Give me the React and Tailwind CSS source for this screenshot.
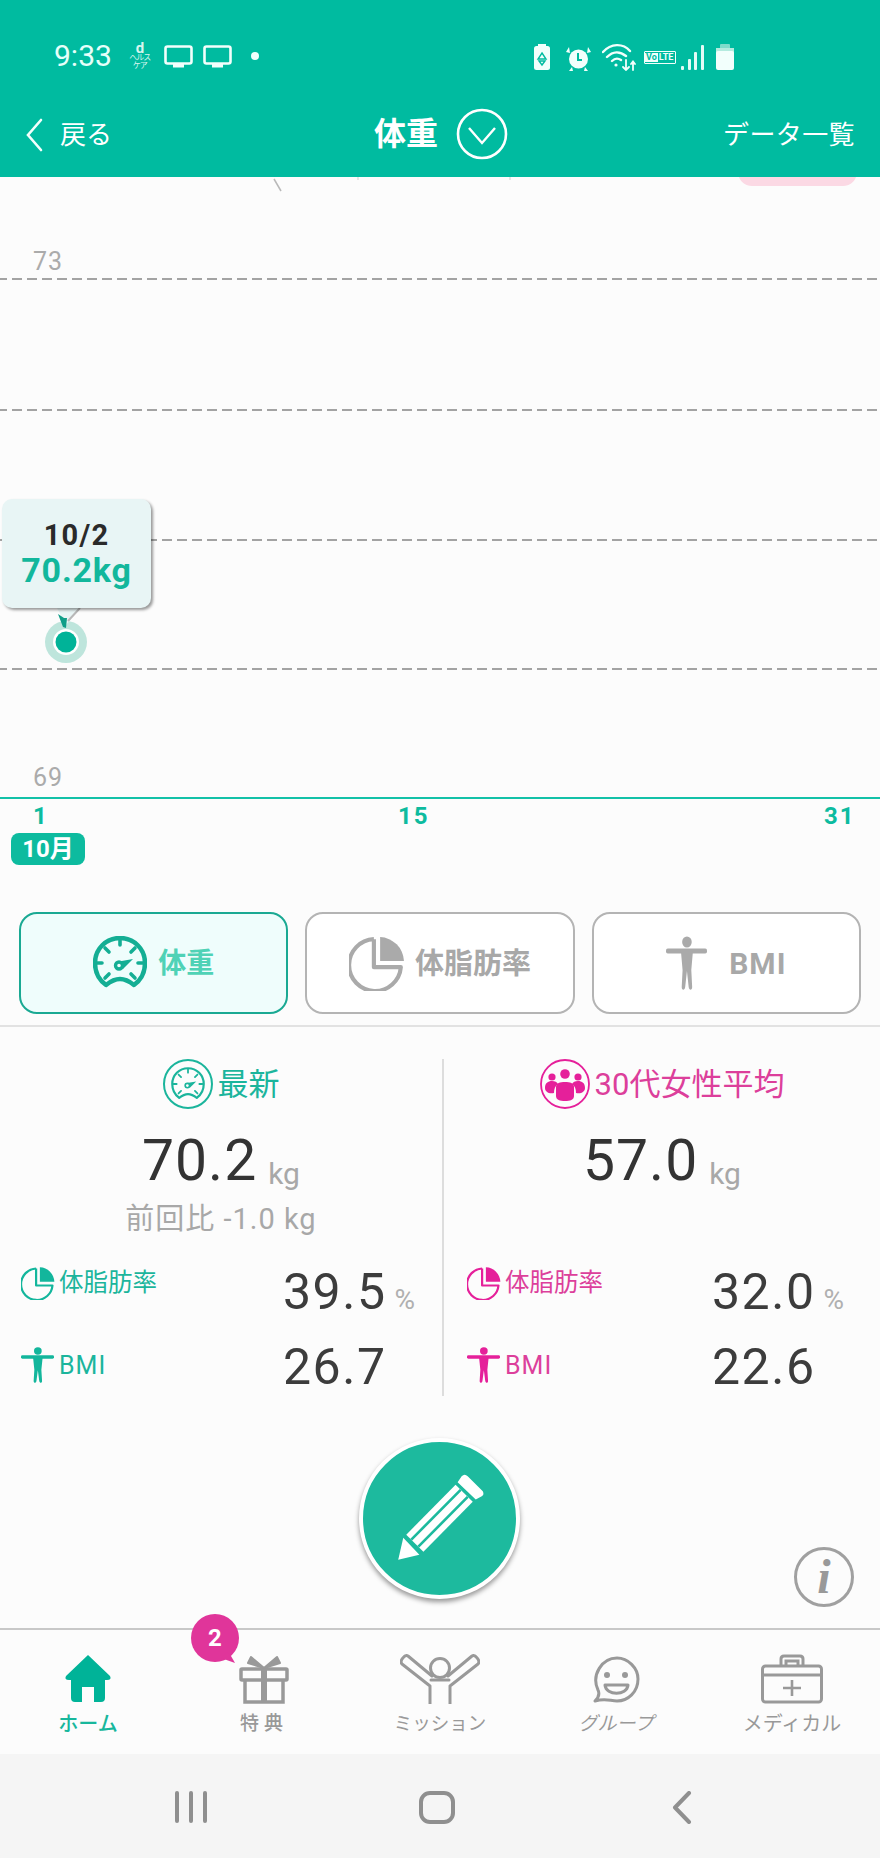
import React from "react";

const TEAL = "#00BBA0";

function Gauge({ size = 54, color = "#14AE94", sw = 4, bg = "#EFFDFC" }) {
  return (
    <svg width={size} height={size} viewBox="0 0 54 54" fill="none" stroke={color} strokeWidth={sw} strokeLinecap="round" strokeLinejoin="round">
      <path d="M13 49 C6 44 2 36 2 27 C2 13 13 2 27 2 C41 2 52 13 52 27 C52 36 48 44 41 49 C36 45 32 43 27 43 C22 43 18 45 13 49 Z" />
      <path d="M27 3 V9 M12 12 L16 16 M42 12 L38 16 M4 27 H9 M45 27 H50 M12 42 L16 38 M42 42 L38 38" strokeWidth={sw * 0.8} />
      <path d="M23 26 L40 23 L30 33 Z" fill={color} stroke="none" />
      <circle cx="26" cy="29.5" r="3.5" fill={bg} strokeWidth={sw * 0.75} />
    </svg>
  );
}

function Pie({ size = 54, color = "#AAAAAA", sw = 4 }) {
  return (
    <svg width={size} height={size} viewBox="0 0 54 54" fill="none">
      <path d="M24 4 V31 H50 A25 25 0 1 1 24 4" stroke={color} strokeWidth={sw} strokeLinejoin="round" />
      <path d="M30 2 A24 24 0 0 1 53 25 H30 Z" fill={color} />
    </svg>
  );
}

function Person({ w = 47, h = 54, color = "#AAAAAA" }) {
  return (
    <svg width={w} height={h} viewBox="0 0 47 54" preserveAspectRatio="none" fill={color}>
      <circle cx="24" cy="6" r="5.5" />
      <rect x="0" y="12.5" width="47" height="5" rx="2" />
      <path d="M17 14 H31 L29 34 L30 51 C30 54.5 26.5 54.5 26 51 L24 35 L22 51 C21.5 54.5 18 54.5 18 51 L19 34 Z" />
    </svg>
  );
}

function GroupPeople() {
  return (
    <svg width="50" height="50" viewBox="0 0 50 50" fill="none">
      <circle cx="25" cy="25" r="24" stroke="#E5209A" strokeWidth="1.8" />
      <g fill="#E5209A">
        <circle cx="25" cy="15" r="4.8" />
        <circle cx="12" cy="18" r="3.6" />
        <circle cx="38" cy="18" r="3.6" />
        <path d="M5 29 C5 24 8 22 12 22 C15 22 17 23 18 25 C15 27 14 30 14 34 C9 35 5 33 5 29 Z" />
        <path d="M45 29 C45 24 42 22 38 22 C35 22 33 23 32 25 C35 27 36 30 36 34 C41 35 45 33 45 29 Z" />
        <path d="M16 28 C16 24 20 23 25 23 C30 23 34 24 34 28 V37 C34 41 30 42 25 42 C20 42 16 41 16 37 Z" />
      </g>
    </svg>
  );
}

function BigValue({ value }) {
  return (
    <div className="flex items-baseline">
      <span className="text-[57px] leading-[66px] tracking-[1px] text-[#333333]">{value}</span>
      <span className="relative top-[4px] ml-[11px] text-[30px] leading-none text-[#A8A8A8]">kg</span>
    </div>
  );
}

function SmallValue({ value, unit }) {
  return (
    <div className="flex items-baseline">
      <span className="text-[50px] leading-[58px] tracking-[1.5px] text-[#3C3C3C]">{value}</span>
      {unit && <span className="ml-[8px] text-[28px] leading-none text-[#B0B0B0]">{unit}</span>}
    </div>
  );
}

function StatColumn({ heading, icon, value, sub, color, pie, person, rows, pad, labelW, className = "" }) {
  return (
    <div className={`flex flex-col ${className}`}>
      <div className="flex h-[50px] items-center justify-center gap-[5px]">
        {icon}
        <span className="text-[31px] leading-none" style={{ color }}>{heading}</span>
      </div>
      <div className="mt-[19px] flex h-[66px] justify-center">
        <BigValue value={value} />
      </div>
      <div className="mt-[7px] flex h-[36px] items-center justify-center whitespace-nowrap text-[29px] leading-none tracking-[1px] text-[#A8A8A8]">{sub}</div>
      <div className="mt-[26px] flex h-[58px] items-start" style={{ paddingLeft: pad }}>
        <div className="mt-[3px] flex items-center gap-[4px]" style={{ width: labelW }}>
          {pie}
          <span className="text-[24.5px] leading-none" style={{ color }}>体脂肪率</span>
        </div>
        <SmallValue value={rows[0]} unit="%" />
      </div>
      <div className="mt-[17px] flex h-[58px] items-start" style={{ paddingLeft: pad }}>
        <div className="mt-[9px] flex items-center gap-[5px]" style={{ width: labelW }}>
          {person}
          <span className="text-[25px] leading-none tracking-[1px]" style={{ color }}>BMI</span>
        </div>
        <SmallValue value={rows[1]} />
      </div>
    </div>
  );
}

function TabButton({ active, icon, label, gap, labelCls = "text-[28px]" }) {
  return (
    <button
      className={`flex h-[102px] w-[270px] items-center justify-center rounded-[18px] border-2 ${
        active ? "border-[#1AA993] bg-[#EFFDFC] text-[#4FD2B6]" : "border-[#B4B4B4] bg-white text-[#A8A8A8]"
      } ${gap}`}
    >
      {icon}
      <span className={`pt-[2px] font-bold leading-none ${labelCls}`}>{label}</span>
    </button>
  );
}

function NavItem({ icon, label, cls }) {
  return (
    <div className="flex w-[176px] flex-col items-center">
      <div className="flex h-[52px] items-end">{icon}</div>
      <span className={`mt-[8px] whitespace-nowrap leading-[24px] ${cls}`}>{label}</span>
    </div>
  );
}

export default function App() {
  return (
    <div className="flex h-[1858px] w-[880px] flex-col overflow-hidden bg-[#FCFCFC] font-['Roboto','Noto_Sans_CJK_JP',sans-serif]">
      <header className="h-[177px] shrink-0 bg-[#00BBA0] text-white">
        <div className="flex h-[85px] items-start justify-between pl-[54px] pr-[146px] pt-[41px]">
          <div className="flex items-center">
            <span className="text-[30px] leading-[30px] text-[#E6FFFA]">9:33</span>
            <div className="ml-[17px] flex w-[22px] flex-col items-center whitespace-nowrap text-[#D8F5EE]">
              <span className="text-[15px] font-bold leading-[12px]">d</span>
              <span className="text-[8px] leading-[8px] tracking-[-1px]">ヘルス</span>
              <span className="text-[8px] leading-[8px] tracking-[-1px]">ケア</span>
            </div>
            {[0, 1].map((i) => (
              <svg key={i} className={i === 0 ? "ml-[13px]" : "ml-[10px]"} width="29" height="23" viewBox="0 0 29 23" fill="none">
                <rect x="1.5" y="1.5" width="26" height="17" rx="2" stroke="#F2FFFC" strokeWidth="2.6" />
                <rect x="9" y="19" width="11" height="3.5" fill="#F2FFFC" />
              </svg>
            ))}
            <span className="ml-[19px] h-[8px] w-[8px] rounded-full bg-[#F2FFFC]" />
          </div>
          <div className="flex items-center pt-[2px]">
            <svg width="16" height="26" viewBox="0 0 16 26">
              <rect x="4" y="0" width="8" height="3" fill="#F2FFFC" />
              <rect x="0" y="2" width="16" height="24" rx="2.5" fill="#F2FFFC" />
              <path d="M8 9 L12 15 H4 Z M5 17 H11 L8 21 Z" fill="none" stroke={TEAL} strokeWidth="1.4" />
            </svg>
            <svg className="ml-[16px]" width="25" height="27" viewBox="0 0 25 27">
              <circle cx="12.5" cy="15" r="9.5" fill="#F2FFFC" />
              <path d="M3 3 L0 8 L4 9 Z M22 3 L25 8 L21 9 Z M6 23 L3 27 H7 Z M19 23 L22 27 H18 Z" fill="#F2FFFC" />
              <path d="M12 9 V16 H16" fill="none" stroke={TEAL} strokeWidth="2" />
            </svg>
            <svg className="ml-[11px]" width="34" height="28" viewBox="0 0 34 28" fill="none" stroke="#F2FFFC" strokeWidth="2.4" strokeLinecap="round">
              <path d="M1 9 C9 0 21 0 28 8 M5 14 C11 8 18 8 24 13 M10 18 C13 15 16 15 19 17" />
              <circle cx="14" cy="22" r="1.6" fill="#F2FFFC" stroke="none" />
              <path d="M24 17 V27 M21 24 L24 27 L27 24 M31 27 V19 M29 21 L31 18.5 L33 21" strokeWidth="1.8" />
            </svg>
            <div className="ml-[8px] flex h-[13px] w-[32px] items-center overflow-hidden rounded-[1px] border border-[#F2FFFC] text-[9px] font-bold leading-none">
              <span className="bg-[#F2FFFC] px-[1px] text-[#00BBA0]">Vo</span>
              <span className="pl-[1px] text-[#F2FFFC]">LTE</span>
            </div>
            <svg className="ml-[5px]" width="23" height="25" viewBox="0 0 23 25" fill="#E4FBF6">
              <rect x="0" y="21" width="3" height="4" rx="1" />
              <rect x="7" y="14" width="3" height="11" rx="1" />
              <rect x="13" y="7" width="3" height="18" rx="1" />
              <rect x="20" y="0" width="3" height="25" rx="1" />
            </svg>
            <svg className="ml-[12px]" width="18" height="26" viewBox="0 0 18 26">
              <rect x="4" y="0" width="10" height="5" rx="1" fill="#7FDCCB" />
              <rect x="0" y="4" width="18" height="6" fill="#B4EBDF" />
              <rect x="0" y="7" width="18" height="19" rx="2" fill="#F2FFFC" />
            </svg>
          </div>
        </div>
        <div className="relative flex h-[92px] items-center justify-between pl-[25px] pr-[25px] pt-[8px]">
          <div className="flex items-center gap-[17px]">
            <svg width="18" height="34" viewBox="0 0 18 34" fill="none" stroke="#F2FFFC" strokeWidth="2.6" strokeLinecap="round">
              <path d="M16 2 L3 17 L16 32" />
            </svg>
            <span className="text-[26px] leading-none">戻る</span>
          </div>
          <div className="absolute left-[374px] top-[23px] flex items-center gap-[18px]">
            <span className="text-[32px] font-bold leading-none">体重</span>
            <svg width="52" height="52" viewBox="0 0 52 52" fill="none" stroke="#fff" strokeWidth="2.6">
              <circle cx="26" cy="26" r="24" />
              <path d="M13 20 L26 35 L39 20" strokeWidth="2.4" />
            </svg>
          </div>
          <span className="text-[26px] leading-none tracking-[0.4px]">データ一覧</span>
        </div>
      </header>

      <section className="relative h-[735px] shrink-0 overflow-hidden">
        <svg className="absolute inset-0" width="880" height="735" fill="none">
          <rect x="738" y="-30" width="119" height="39" rx="14" fill="#FBD9E4" />
          <path d="M274 2 L281 14" stroke="#B9B9B9" strokeWidth="1.5" />
          <path d="M358 0 V3 M510 0 V3" stroke="#CFCFCF" strokeWidth="1" />
          {[102, 233, 363, 492].map((y) => (
            <line key={y} x1="-3" x2="880" y1={y} y2={y} stroke="#A3A3A3" strokeWidth="2" strokeDasharray="10 5" />
          ))}
          <line x1="0" x2="880" y1="621" y2="621" stroke="#12C1A8" strokeWidth="2" />
          <circle cx="66" cy="465" r="21" fill="#BEE5DC" />
          <path d="M57 431 L66 448 L80 431 Z" fill="#E8F5F5" />
          <path d="M80 431 L68 444" stroke="#B8B8B8" strokeWidth="2" />
          <path d="M58 437 L64 441 L67 441 L66 451 L63 450 Z" fill="#109E88" />
          <circle cx="66" cy="465" r="13" fill="#fff" />
          <circle cx="66" cy="465" r="10.5" fill="#00B398" />
        </svg>
        <span className="absolute left-[33px] top-[70px] text-[25px] leading-[30px] tracking-[1px] text-[#ABABAB]">73</span>
        <span className="absolute left-[33px] top-[586px] text-[25px] leading-[30px] tracking-[1px] text-[#ABABAB]">69</span>
        <div className="absolute left-[2px] top-[322px] flex h-[109px] w-[149px] flex-col items-center justify-center rounded-[10px] bg-[#E8F5F5] shadow-[2px_2px_3px_rgba(0,0,0,0.4)]">
          <span className="text-[29px] font-bold leading-[32px] tracking-[1.2px] text-[#2A2A2A]">10/2</span>
          <span className="text-[34px] font-bold leading-[38px] tracking-[0.8px] text-[#12B79C]">70.2kg</span>
        </div>
        <span className="absolute left-[33px] top-[625px] text-[24px] font-bold leading-[28px] text-[#0DBB9F]">1</span>
        <span className="absolute left-[398px] top-[625px] text-[24px] font-bold leading-[28px] tracking-[2px] text-[#0DBB9F]">15</span>
        <span className="absolute left-[824px] top-[625px] text-[24px] font-bold leading-[28px] tracking-[2px] text-[#0DBB9F]">31</span>
        <div className="absolute left-[11px] top-[656px] flex h-[32px] w-[74px] items-center justify-center rounded-[8px] bg-[#0DBB9F] text-[24px] font-bold leading-none text-white">10月</div>
      </section>

      <div className="flex shrink-0 gap-[17px] px-[19px]">
        <TabButton active icon={<Gauge size={54} color="#14AE94" sw={4.5} />} label="体重" gap="gap-[11px]" />
        <TabButton icon={<Pie size={56} />} label="体脂肪率" gap="gap-[10px]" labelCls="text-[29px]" />
        <TabButton icon={<Person w={41} />} label="BMI" gap="gap-[22px]" labelCls="text-[30px] tracking-[1px]" />
      </div>

      <div className="mt-[11px] h-[2px] shrink-0 bg-[#E2E2E2]" />

      <div className="mt-[32px] grid h-[334px] shrink-0 grid-cols-[442px_438px]">
        <StatColumn
          heading="最新"
          color="#1BB59C"
          icon={
            <span className="flex h-[50px] w-[50px] items-center justify-center rounded-full border-2 border-[#1BB59C]">
              <Gauge size={34} color="#1BB59C" sw={3.5} bg="#FCFCFC" />
            </span>
          }
          value="70.2"
          sub="前回比 -1.0 kg"
          pie={<Pie size={34} color="#13B69C" sw={3.5} />}
          person={<Person w={33} h={36} color="#13B69C" />}
          rows={["39.5", "26.7"]}
          pad="21px"
          labelW="262px"
        />
        <StatColumn
          className="border-l-2 border-[#DDDDDD]"
          heading="30代女性平均"
          color="#DC3F9B"
          icon={<GroupPeople />}
          value="57.0"
          sub=""
          pie={<Pie size={34} color="#E5209A" sw={3.5} />}
          person={<Person w={33} h={36} color="#E5209A" />}
          rows={["32.0", "22.6"]}
          pad="23px"
          labelW="245px"
        />
      </div>

      <div className="relative flex h-[235px] shrink-0 justify-center">
        <button className="mt-[45px] flex h-[161px] w-[161px] -translate-x-[1px] items-center justify-center rounded-full border-4 border-white bg-[#1DBA9E] shadow-[0_3px_5px_rgba(0,0,0,0.4)]">
          <svg width="153" height="153" viewBox="4 4 152 152" fill="none">
            <path d="M39 121 L44 99 L60 116 Z" fill="#fff" />
            <path d="M55.5 104.5 L104.5 55" stroke="#fff" strokeWidth="24" />
            <path d="M52 101 L101 51.5 M59 108 L108 58.5" stroke="#1DBA9E" strokeWidth="2.6" />
            <path d="M98 44 L102 38 C104 36 106 36 108 38 L123 53 C124 55 124 57 122 58 L116 61 Z" fill="#fff" />
          </svg>
        </button>
        <div className="absolute left-[794px] top-[154px] flex h-[60px] w-[60px] items-center justify-center rounded-full border-[3px] border-[#A0A0A0] font-['Liberation_Serif',serif] text-[48px] font-bold italic leading-none text-[#999999]">
          i
        </div>
      </div>

      <nav className="relative flex h-[126px] shrink-0 border-t-2 border-[#C8C8C8] pt-[22px]">
        <NavItem
          cls="text-[20px] font-medium text-[#18B79C]"
          label="ホーム"
          icon={
            <svg width="48" height="50" viewBox="0 0 48 50" fill="#00B398">
              <path d="M24 1 L46 22 Q48 26 43 26 H41 V44 Q41 48 37 48 H30 V33 H18 V48 H11 Q7 48 7 44 V26 H5 Q0 26 2 22 Z" />
            </svg>
          }
        />
        <NavItem
          cls="text-[19px] font-medium tracking-[5px] text-[#999999]"
          label="特典"
          icon={
            <svg width="50" height="50" viewBox="0 0 50 50" fill="none" stroke="#999999" strokeWidth="3.5">
              <rect x="2" y="15" width="46" height="11" rx="1" />
              <path d="M6 26 V48 H44 V26" />
              <path d="M25 15 V48" strokeWidth="6" />
              <path d="M25 14 L12 3 L9 9 Z M25 14 L38 3 L41 9 Z" fill="#999999" strokeLinejoin="round" strokeWidth="2" />
            </svg>
          }
        />
        <NavItem
          cls="text-[18.5px] text-[#999999]"
          label="ミッション"
          icon={
            <svg width="80" height="50" viewBox="0 0 80 50" fill="none" stroke="#999999" strokeWidth="3" strokeLinecap="round" strokeLinejoin="round">
              <path d="M30 50 V32 L2 10 C-1 7 5 0 8 2 L32 22" />
              <path d="M50 50 V32 L78 10 C81 7 75 0 72 2 L48 22" />
              <path d="M31 26 H49" />
              <circle cx="40" cy="14" r="9.5" />
            </svg>
          }
        />
        <NavItem
          cls="text-[19px] italic text-[#999999]"
          label="グループ"
          icon={
            <svg width="48" height="48" viewBox="0 0 48 48" fill="none" stroke="#999999" strokeWidth="3">
              <path d="M3 45 C7 41 8 38 6 34 C-1 19 10 2 25 2 C36 2 46 12 46 23 C46 36 36 45 25 45 C18 45 14 42 3 45 Z" strokeLinejoin="round" />
              <circle cx="15" cy="19" r="3" fill="#999999" stroke="none" />
              <circle cx="33" cy="19" r="3" fill="#999999" stroke="none" />
              <path d="M13 29 H36 C35 40 14 40 13 29 Z" strokeLinejoin="round" />
            </svg>
          }
        />
        <NavItem
          cls="text-[20px] text-[#999999]"
          label="メディカル"
          icon={
            <svg width="62" height="50" viewBox="0 0 62 50" fill="none" stroke="#999999" strokeWidth="3">
              <rect x="1.5" y="12" width="59" height="36" rx="3" />
              <path d="M1.5 21 H60.5" />
              <path d="M20 12 V5 Q20 2 23 2 H39 Q42 2 42 5 V12 M25 11 V7 H37 V11" />
              <path d="M22 34 H40 M31 26 V42" strokeWidth="2.6" />
            </svg>
          }
        />
        <div className="absolute left-[191px] top-[-16px] flex h-[48px] w-[48px] items-center justify-center rounded-full bg-[#E0359A] text-[24px] font-bold leading-none text-white">
          2
          <svg className="absolute left-[30px] top-[38px]" width="14" height="12" viewBox="0 0 14 12">
            <path d="M0 6 L6 0 L10 4 L14 11 Z" fill="#E0359A" />
          </svg>
        </div>
      </nav>

      <div className="flex flex-1 items-start bg-[#F5F5F5] pl-[175px] pt-[37px]">
        <div className="flex h-[32px] gap-[10px]">
          <span className="w-[4px] rounded-full bg-[#8F8F8F]" />
          <span className="w-[4px] rounded-full bg-[#8F8F8F]" />
          <span className="w-[4px] rounded-full bg-[#8F8F8F]" />
        </div>
        <span className="ml-[212px] h-[33px] w-[36px] rounded-[11px] border-4 border-[#8F8F8F]" />
        <svg className="ml-[217px]" width="20" height="33" viewBox="0 0 20 33" fill="none" stroke="#8F8F8F" strokeWidth="4" strokeLinecap="round" strokeLinejoin="round">
          <path d="M17 2 L3 16.5 L17 31" />
        </svg>
      </div>
    </div>
  );
}
